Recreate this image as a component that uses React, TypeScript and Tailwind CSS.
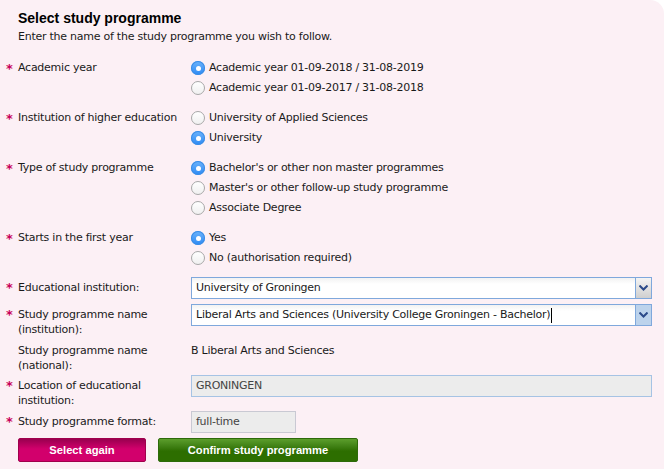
import React from "react";

const body = { fontFamily: '"DejaVu Sans", Verdana, sans-serif' };

function Star({ show = true }: { show?: boolean }) {
  return (
    <div className="w-[12px] shrink-0 text-[13px] font-bold leading-[15px] text-[#c8005a]">
      {show ? "*" : ""}
    </div>
  );
}

function Radio({ checked, label }: { checked?: boolean; label: string }) {
  return (
    <div className="flex h-[20px] items-center gap-[4px]">
      {checked ? (
        <span className="flex h-[14px] w-[14px] items-center justify-center rounded-full bg-gradient-to-b from-[#6cb3fa] to-[#2a8af5] shadow-[inset_0_0_0_1px_#3a8de6]">
          <span className="h-[5px] w-[5px] rounded-full bg-white" />
        </span>
      ) : (
        <span className="h-[14px] w-[14px] rounded-full border border-[#a8a8a8] bg-gradient-to-b from-white to-[#f0f0f0]" />
      )}
      <span>{label}</span>
    </div>
  );
}

function RadioRow({
  label,
  options,
  selected,
}: {
  label: string;
  options: string[];
  selected: number;
}) {
  return (
    <div className="mb-[10px] flex">
      <div className="flex h-[20px] items-center">
        <Star />
      </div>
      <div className="flex h-[20px] w-[173px] shrink-0 items-center">{label}</div>
      <div className="flex flex-col">
        {options.map((o, i) => (
          <Radio key={o} label={o} checked={i === selected} />
        ))}
      </div>
    </div>
  );
}

function Chevron() {
  return (
    <svg width="9" height="6" viewBox="0 0 9 6">
      <path d="M0.5 0.5 L4.5 4.5 L8.5 0.5" fill="none" stroke="#2b4a8a" strokeWidth="2" />
    </svg>
  );
}

function Select({ value, focused }: { value: string; focused?: boolean }) {
  return (
    <div className="flex h-[22px] w-[461px] border border-[#7fa8dc] bg-gradient-to-b from-[#f2f2f2] to-white to-[30%]">
      <div className="flex flex-1 items-center px-[4px]">
        {value}
        {focused && <span className="ml-[1px] h-[15px] w-px bg-black" />}
      </div>
      <div
        className={
          focused
            ? "flex w-[16px] items-center justify-center border-l border-[#7fa8dc] bg-[#bcd3ec]"
            : "flex w-[16px] items-center justify-center border-l border-[#7fa8dc] bg-gradient-to-b from-[#f4f4f4] to-[#cfcfcf]"
        }
      >
        <Chevron />
      </div>
    </div>
  );
}

function FieldRow({
  star = true,
  lines,
  children,
  mb,
}: {
  star?: boolean;
  lines: string[];
  children: React.ReactNode;
  mb: string;
}) {
  return (
    <div className={`flex ${mb}`}>
      <div className="pt-[3px]">
        <Star show={star} />
      </div>
      <div className="w-[173px] shrink-0 pt-[3px] leading-[15px]">
        {lines.map((l) => (
          <div key={l}>{l}</div>
        ))}
      </div>
      <div>{children}</div>
    </div>
  );
}

export default function App() {
  return (
    <div className="min-h-[469px] bg-white">
      <div
        className="h-[469px] w-[664px] rounded-tr-[14px] bg-[#fcf0f5] pl-[6px] pt-[10px] text-[11px] tracking-[-0.25px] text-[#1a1a1a]"
        style={body}
      >
        <div className="pl-[12px]">
          <h1 className="font-['Liberation_Sans',Arial,sans-serif] text-[14px] font-bold leading-[16px] tracking-normal text-black">
            Select study programme
          </h1>
          <p className="mt-[3px] leading-[15px]">
            Enter the name of the study programme you wish to follow.
          </p>
        </div>
        <div className="mt-[14px]">
          <RadioRow
            label="Academic year"
            selected={0}
            options={[
              "Academic year 01-09-2018 / 31-08-2019",
              "Academic year 01-09-2017 / 31-08-2018",
            ]}
          />
          <RadioRow
            label="Institution of higher education"
            selected={1}
            options={["University of Applied Sciences", "University"]}
          />
          <RadioRow
            label="Type of study programme"
            selected={0}
            options={[
              "Bachelor's or other non master programmes",
              "Master's or other follow-up study programme",
              "Associate Degree",
            ]}
          />
          <RadioRow
            label="Starts in the first year"
            selected={0}
            options={["Yes", "No (authorisation required)"]}
          />
        </div>
        <div className="-mt-[1px]">
          <FieldRow lines={["Educational institution:"]} mb="mb-[5px]">
            <Select value="University of Groningen" />
          </FieldRow>
          <FieldRow lines={["Study programme name", "(institution):"]} mb="mb-[3px]">
            <Select
              value="Liberal Arts and Sciences (University College Groningen - Bachelor)"
              focused
            />
          </FieldRow>
          <FieldRow star={false} lines={["Study programme name", "(national):"]} mb="mb-[2px]">
            <div className="pt-[3px] leading-[15px]">B Liberal Arts and Sciences</div>
          </FieldRow>
          <FieldRow lines={["Location of educational", "institution:"]} mb="mb-[3px]">
            <div className="flex h-[22px] w-[461px] items-center border border-[#a6c3e4] bg-[#ececec] px-[4px] text-[#444]">
              GRONINGEN
            </div>
          </FieldRow>
          <FieldRow lines={["Study programme format:"]} mb="mb-[5px]">
            <div className="flex h-[22px] w-[105px] items-center border border-[#c9c9d3] bg-[#ececec] px-[4px] text-[#444]">
              full-time
            </div>
          </FieldRow>
        </div>
        <div className="flex gap-[12px] pl-[12px] font-['Liberation_Sans',Arial,sans-serif] text-[11.2px] font-bold tracking-normal text-white">
          <button className="h-[24px] w-[128px] rounded-[2px] border border-[#a0004c] bg-gradient-to-b from-[#99004f] to-[#d2006c] to-[45%]">
            Select again
          </button>
          <button className="h-[24px] w-[200px] rounded-[2px] border border-[#2e6a0a] bg-gradient-to-b from-[#5c9e2c] to-[#2d6e00] to-[55%]">
            Confirm study programme
          </button>
        </div>
      </div>
    </div>
  );
}
